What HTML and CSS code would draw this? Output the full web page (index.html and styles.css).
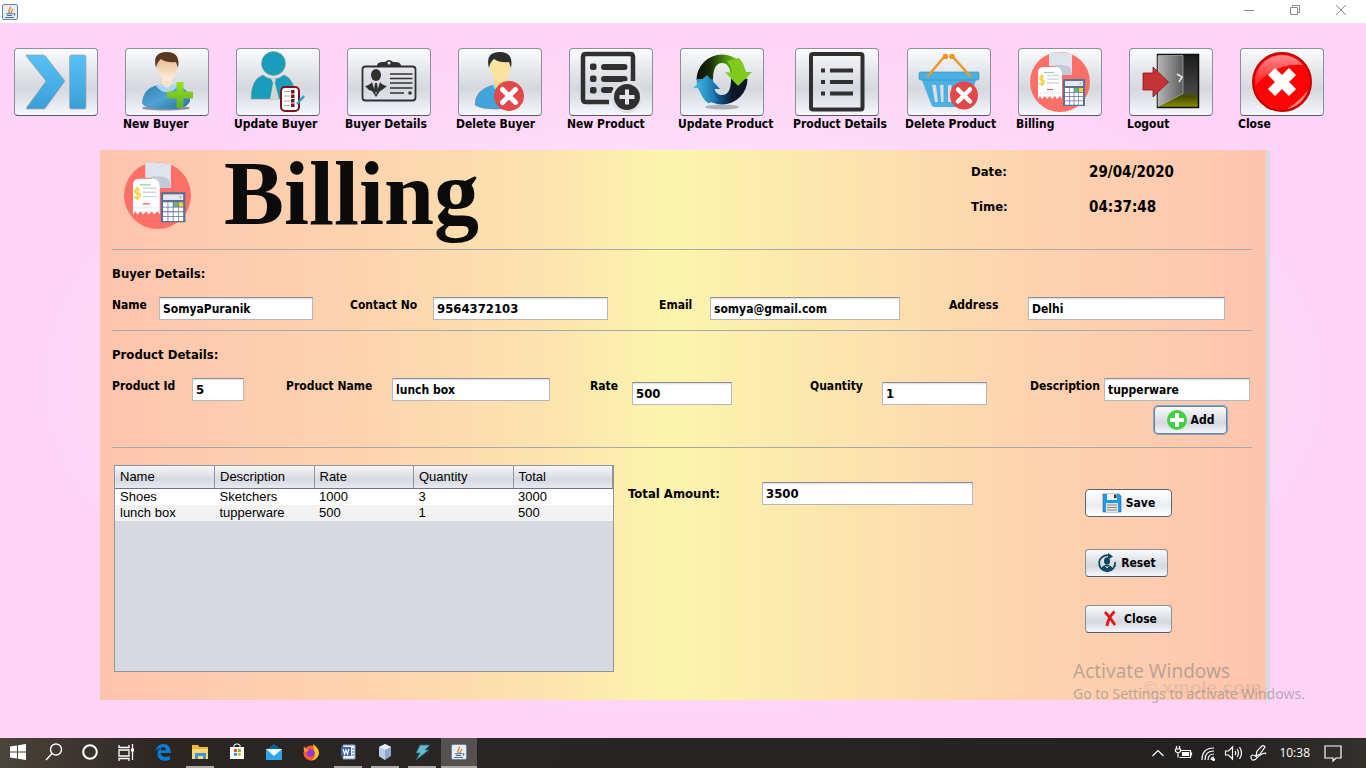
FILE: index.html
```html
<!DOCTYPE html>
<html lang="en">
<head>
<meta charset="utf-8">
<title>Billing</title>
<link rel="stylesheet" href="styles.css">
</head>
<body>
<svg class="defs" width="0" height="0" aria-hidden="true">
  <defs>
    <linearGradient id="gBlue" x1="0" y1="0" x2="0" y2="1"><stop offset="0" stop-color="#57c1f7"/><stop offset="1" stop-color="#3a9fd8"/></linearGradient>
    <linearGradient id="gShirt" x1="0" y1="0" x2="1" y2="1"><stop offset="0" stop-color="#2f7fb0"/><stop offset=".5" stop-color="#4fa3d4"/><stop offset="1" stop-color="#1f6c9c"/></linearGradient>
    <linearGradient id="gSkin" x1="0" y1="0" x2="0" y2="1"><stop offset="0" stop-color="#e8b98c"/><stop offset="1" stop-color="#fff1df"/></linearGradient>
    <linearGradient id="gLime" x1="0" y1="0" x2="0" y2="1"><stop offset="0" stop-color="#9be01c"/><stop offset="1" stop-color="#5fae2b"/></linearGradient>
    <linearGradient id="gGreen" x1="0" y1="0" x2="1" y2="0"><stop offset="0" stop-color="#0a1204"/><stop offset=".25" stop-color="#152707"/><stop offset=".6" stop-color="#4f9a10"/><stop offset="1" stop-color="#8ed321"/></linearGradient>
    <linearGradient id="gNavy" x1="0" y1="0" x2="1" y2="0"><stop offset="0" stop-color="#2fa0d4"/><stop offset=".4" stop-color="#0f5f9b"/><stop offset=".7" stop-color="#0b1726"/><stop offset="1" stop-color="#0b1726"/></linearGradient>
    <linearGradient id="gAqua" x1="0" y1="0" x2="1" y2="0"><stop offset="0" stop-color="#49c3ea"/><stop offset="1" stop-color="#0f62a0"/></linearGradient>
    <linearGradient id="gDoor" x1="0" y1="0" x2="1" y2="0"><stop offset="0" stop-color="#b5b5b5"/><stop offset="1" stop-color="#5c5c5c"/></linearGradient>
    <linearGradient id="gDark" x1="0" y1="0" x2="0" y2="1"><stop offset="0" stop-color="#1c1c1c"/><stop offset=".7" stop-color="#454545"/><stop offset=".8" stop-color="#4b4d00"/><stop offset="1" stop-color="#8a8f00"/></linearGradient>
    <linearGradient id="gGloss" x1="0" y1="0" x2="0" y2="1"><stop offset="0" stop-color="#ff8a8a"/><stop offset="1" stop-color="#ff1a1a"/></linearGradient>
    <symbol id="billing" viewBox="12 4 60 60">
      <circle cx="42" cy="34" r="30" fill="#fe6f67"/>
      <path d="M31 5q11-2 23 1v21H42V18H31z" fill="#dfe3eb"/>
      <path d="M36 18q0-2 8-1 10 0 10 10h-9z" fill="#c3c9d6"/>
      <path d="M20 51V24q0-5 6-5h13q5 1 5 8v24l-2-3-3 3-2-3-3 3-2-3-3 3-2-3-3 3-2-3z" fill="#fff"/>
      <path d="M26 24.500h10" stroke="#8ed6a5" stroke-width="1.200"/>
      <path d="M29 27.500h12M29 31h12M29 35h12" stroke="#cfd5df" stroke-width="1.300"/>
      <path d="M29 41.500h6" stroke="#f2605c" stroke-width="1.200"/>
      <path d="M26 29q-4-2-4 1t3 2q3 2 0 4-2 1-4-1M24 26v12" fill="none" stroke="#fbcf3a" stroke-width="1.500"/>
      <path d="M20 45h23" stroke="#cfd5df" stroke-dasharray="1 1"/>
      <rect x="45" y="31" width="22" height="27" fill="#5b6f92"/>
      <rect x="47" y="33" width="18" height="5" fill="#e4e9f1"/>
      <path d="M61.500 34.500h2v2h-2z" fill="#b4bccb"/>
      <path d="M47 40h4v4h-4zM51.700 40h4v4h-4zM47 44.700h4v3.500h-4zM51.700 44.700h4v3.500h-4zM56.400 44.700h4v3.500h-4zM61 44.700h4v3.500h-4zM47 49h4v3.500h-4zM51.700 49h4v3.500h-4zM56.400 49h4v3.500h-4zM61 49h4v3.500h-4zM47 53.300h4v3.500h-4zM51.700 53.300h4v3.500h-4zM56.400 53.300h4v3.500h-4zM61 53.300h4v3.500h-4z" fill="#fff"/>
      <path d="M56.400 40h4v4h-4z" fill="#5bbd79"/><path d="M61 40h4v4h-4z" fill="#fbcf3a"/>
    </symbol>
    <symbol id="java" viewBox="0 0 16 16">
      <rect x=".5" y=".5" width="15" height="15" rx="1.500" fill="#e7edf2" stroke="#68839b"/>
      <path d="M8 9C4.500 6.500 9.500 5.500 8.300 2.500M9.500 9C8 7.500 11.500 6.500 10.500 4.800" fill="none" stroke="#e8832a" stroke-width="1.300"/>
      <path d="M4 9.800h7M5 11.500h5M3 13.500h9M11.500 9.500q2.500 0 .5 2" fill="none" stroke="#45718f" stroke-width="1.100"/>
    </symbol>
  </defs>
</svg>

<header class="titlebar">
  <svg class="titlebar__icon" viewBox="0 0 16 16" aria-hidden="true"><use href="#java"/></svg>
  <div class="titlebar__controls">
    <button type="button" aria-label="Minimize"><svg viewBox="0 0 12 12"><path d="M1 6.500h10"/></svg></button>
    <button type="button" aria-label="Restore"><svg viewBox="0 0 12 12"><path d="M1.500 3.500h7v7h-7zM3.500 3.500v-2h7v7h-2"/></svg></button>
    <button type="button" aria-label="Close window"><svg viewBox="0 0 12 12"><path d="M1 1l10 10M11 1L1 11"/></svg></button>
  </div>
</header>

<main class="desktop">
  <nav class="toolbar" aria-label="Main">
    <div class="tool">
      <button type="button" class="metal tool__button" aria-label="Collapse">
        <svg viewBox="0 0 84 68"><path d="M12 7h17.500q1 0 2 1.200L51 33 31.500 60q-1 1-2 1H13q-1 0-.5-1.500L32 33 12 8z" fill="url(#gBlue)" stroke="#a9a49f" stroke-width=".7"/><rect x="55.500" y="7" width="16.500" height="54" rx="2" fill="url(#gBlue)" stroke="#a9a49f" stroke-width=".7"/></svg>
      </button>
    </div>
    <div class="tool">
      <button type="button" class="metal tool__button" aria-labelledby="t1">
        <svg viewBox="0 0 84 68"><ellipse cx="41" cy="60" rx="24" ry="2.500" fill="#8d9198"/><path d="M17 55q1-15 16-18h17q15 3 15 16-3 9-24 8-22 0-24-6z" fill="url(#gShirt)"/><path d="M31 38q11 13 22 0l-5-2H36z" fill="#a9d6f5"/><path d="M37 28h10v8q-5 7-10 0z" fill="#fbe3c8"/><path d="M32 12q10-5 20 0 1 12-4 18-6 6-11 0-6-7-5-18z" fill="url(#gSkin)"/><path d="M31 20q-4-15 9-16 16-1 13 16l-2-6q-9 1-15-3-4 3-5 9z" fill="#5a3822"/><path d="M51.500 34h7v9.500H68v7h-9.500V60h-7v-9.500H42v-7h9.500z" fill="url(#gLime)"/></svg>
      </button>
      <span class="tool__label" id="t1">New Buyer</span>
    </div>
    <div class="tool">
      <button type="button" class="metal tool__button" aria-labelledby="t2">
        <svg viewBox="0 0 84 68"><circle cx="37.500" cy="15.500" r="12" fill="#189dba" stroke="#9c9c9c" stroke-width=".6"/><path d="M15 51q0-20 12-24 10 8 21 0 11 4 12 24z" fill="#189dba" stroke="#9c9c9c" stroke-width=".6"/><path d="M35 31l2.500-1.500L40 31l-1 4 4 16h-9l3-16z" fill="#d5d2d2"/><rect x="45" y="39" width="18" height="24" rx="4" fill="#fff" stroke="#7d1420" stroke-width="2"/><path d="M48 43.500h6M48 48h6M48 53h6M48 57.500h6" stroke="#a7a7a7"/><path d="M55 42h3.500v3.500H55zM55 46.500h3.500V50H55zM55 51h3.500v3.500H55zM55 55.500h3.500V59H55z" fill="#7d1420"/><path d="M61 56l7-8" stroke="#2ba5c4" stroke-width="2.500"/></svg>
      </button>
      <span class="tool__label" id="t2">Update Buyer</span>
    </div>
    <div class="tool">
      <button type="button" class="metal tool__button" aria-labelledby="t3">
        <svg viewBox="0 0 84 68"><rect x="15.500" y="18.500" width="53" height="34" rx="3" fill="none" stroke="#303030" stroke-width="1.800"/><path d="M30 18q0-4 6-4h2q4-4 8 0h2q6 0 6 4z" fill="#303030"/><circle cx="42" cy="15" r="1.500" fill="#e9eaec"/><ellipse cx="29" cy="27" rx="5" ry="6" fill="#303030"/><path d="M18 38q5-1 7-4l4 13 4-13q2 3 7 4l-5 4-2 1-4 6-4-6-3-1z" fill="#303030"/><path d="M28 35h2l1 7-2 3-2-3z" fill="#303030"/><path d="M43 26h22.500M43 30.500h22.500M43 35h22.500M43 40h22.500M43 45h14" stroke="#303030" stroke-width="1.600"/><circle cx="63" cy="45" r="1.800" fill="#303030"/></svg>
      </button>
      <span class="tool__label" id="t3">Buyer Details</span>
    </div>
    <div class="tool">
      <button type="button" class="metal tool__button" aria-labelledby="t4">
        <svg viewBox="0 0 84 68"><path d="M17 57q0-15 18-20h12q16 4 15 20-8 4-24 4-15 0-21-4z" fill="#3fa5dc" stroke="#777" stroke-width=".5"/><path d="M34 37l7 9q5-2 8-8z" fill="#8ee5dd"/><path d="M36 27h12v8l-7 6-5-4z" fill="#f6d88b"/><path d="M32 14q10-4 20 0 1 11-4 17-6 6-11 0-6-7-5-17z" fill="#fae39d"/><path d="M31 20q-4-15 9-16 16-1 13 16l-2-6q-9 1-15-3-4 3-5 9z" fill="#2d2d2d"/><circle cx="51" cy="48" r="15" fill="#e2474a"/><path d="M44.500 41.500l13 13M57.500 41.500l-13 13" stroke="#fff" stroke-width="5" stroke-linecap="round"/></svg>
      </button>
      <span class="tool__label" id="t4">Delete Buyer</span>
    </div>
    <div class="tool">
      <button type="button" class="metal tool__button" aria-labelledby="t5">
        <svg viewBox="0 0 84 68"><path d="M40 54H17q-3 0-3-3V9q0-3 3-3h44q3 0 3 3v24" fill="none" stroke="#303030" stroke-width="4.500"/><path d="M35 19h20.500M35 31h20.500M35 42h7" stroke="#303030" stroke-width="6" stroke-linecap="round"/><rect x="21" y="15.500" width="6.500" height="6.500" rx="2" fill="#303030"/><rect x="21" y="27.500" width="6.500" height="6.500" rx="2" fill="#303030"/><rect x="21" y="39" width="6.500" height="6.500" rx="2" fill="#303030"/><circle cx="58" cy="49" r="16" fill="#dfe1e5"/><circle cx="58" cy="49" r="13" fill="#303030"/><path d="M50.500 49h15M58 41.500v15" stroke="#e5e7ea" stroke-width="4"/></svg>
      </button>
      <span class="tool__label" id="t5">New Product</span>
    </div>
    <div class="tool">
      <button type="button" class="metal tool__button" aria-labelledby="t6">
        <svg viewBox="0 0 84 68"><ellipse cx="42" cy="59" rx="17" ry="2.500" fill="#b0b2b8"/><path d="M16.500 32a25.500 25.500 0 0 1 51 0H51q0-17-9-17t-9 17z" fill="url(#gGreen)"/><path d="M67.500 31a25.500 25.500 0 0 1-51 0H33q0 16 9 16t9-16z" fill="url(#gNavy)"/><path d="M45 24l7 1q-1-7-5-12l12-3q6 6 6 14h7L58 38z" fill="#82c91e"/><path d="M13 40l14-13 13 14h-7q1 6 6 12l-11 2q-8-6-8-15z" fill="url(#gAqua)"/></svg>
      </button>
      <span class="tool__label" id="t6">Update Product</span>
    </div>
    <div class="tool">
      <button type="button" class="metal tool__button" aria-labelledby="t7">
        <svg viewBox="0 0 84 68"><rect x="16" y="6" width="51.500" height="55.500" rx="2" fill="none" stroke="#303030" stroke-width="4"/><path d="M35 22.500h23M35 34h23M35 45.500h23M26 22.500h4M26 34h4M26 45.500h4" stroke="#303030" stroke-width="4"/></svg>
      </button>
      <span class="tool__label" id="t7">Product Details</span>
    </div>
    <div class="tool">
      <button type="button" class="metal tool__button" aria-labelledby="t8">
        <svg viewBox="0 0 84 68"><path d="M15 32h54l-8 24q-1 3-4 3H28q-3 0-4-3z" fill="#4bb1e4"/><path d="M25 37h4l2 17h-3zM33 37h3.500v17H34zM41 37h3.500v17H41zM49 37h4l-1 17h-3z" fill="#dcdde1"/><path d="M13 24h58q1 0 1 1.500v5q0 1.500-2 1.500H14q-2 0-2-1.500v-5q0-1.500 1-1.500z" fill="#4bb1e4" stroke="#2f8cc0" stroke-width=".6"/><path d="M21 28L37 9M63 28L46 9" stroke="#e99a24" stroke-width="2.600" stroke-linecap="round"/><circle cx="38.500" cy="8.500" r="2.800" fill="#e99a24"/><circle cx="45" cy="8.500" r="2.800" fill="#e99a24"/><circle cx="57" cy="47.500" r="14" fill="#e2474a"/><path d="M51 41.500l12 12M63 41.500l-12 12" stroke="#fff" stroke-width="4.500" stroke-linecap="round"/></svg>
      </button>
      <span class="tool__label" id="t8">Delete Product</span>
    </div>
    <div class="tool">
      <button type="button" class="metal tool__button" aria-labelledby="t9">
        <svg viewBox="0 0 84 68"><use href="#billing" x="12" y="4" width="60" height="60"/></svg>
      </button>
      <span class="tool__label" id="t9">Billing</span>
    </div>
    <div class="tool">
      <button type="button" class="metal tool__button" aria-labelledby="t10">
        <svg viewBox="0 0 84 68"><rect x="28.500" y="6.500" width="41" height="53" fill="url(#gDark)" stroke="#0d0d0d" stroke-width="1.500"/><path d="M29 7.500h25v38L29 58.500z" fill="url(#gDoor)" stroke="#c4c4c4" stroke-width=".6"/><path d="M48 26l5 3-3 5" fill="none" stroke="#eee" stroke-width="1.500"/><path d="M14 25h10v-6l15.500 15L24 49v-7H14z" fill="#c73236" stroke="#7d1518" stroke-width=".8"/></svg>
      </button>
      <span class="tool__label" id="t10">Logout</span>
    </div>
    <div class="tool">
      <button type="button" class="metal tool__button" aria-labelledby="t11">
        <svg viewBox="0 0 84 68"><circle cx="42" cy="34" r="29" fill="#fb0506" stroke="#c40000" stroke-width="2"/><path d="M15 34a27 27 0 0 1 48-17Q36 14 15 38z" fill="url(#gGloss)"/><path d="M68 42q-6 16-21 19 12-7 21-19z" fill="#ff8b8b"/><path d="M31.500 23.500l21 21M52.500 23.500l-21 21" stroke="#fff" stroke-width="10"/></svg>
      </button>
      <span class="tool__label" id="t11">Close</span>
    </div>
  </nav>

  <section class="panel" aria-label="Billing">
    <div class="panel__head">
      <svg class="panel__logo" viewBox="0 0 60 60" aria-hidden="true"><use href="#billing" width="60" height="60"/></svg>
      <h1 class="panel__title">Billing</h1>
      <dl class="stamp">
        <dt>Date:</dt><dd>29/04/2020</dd>
        <dt>Time:</dt><dd>04:37:48</dd>
      </dl>
    </div>

    <div class="group">
      <h2>Buyer Details:</h2>
      <div class="row row--buyer">
        <div class="field field--name"><label for="name">Name</label><input id="name" type="text" value="SomyaPuranik"></div>
        <div class="field field--contact"><label for="contact">Contact No</label><input id="contact" class="numeric" type="text" value="9564372103"></div>
        <div class="field field--email"><label for="email">Email</label><input id="email" type="text" value="somya@gmail.com"></div>
        <div class="field field--address"><label for="address">Address</label><input id="address" type="text" value="Delhi"></div>
      </div>
    </div>

    <div class="group group--product">
      <h2>Product Details:</h2>
      <div class="row row--product">
        <div class="field field--id"><label for="pid">Product Id</label><input id="pid" class="numeric" type="text" value="5"></div>
        <div class="field field--product"><label for="pname">Product Name</label><input id="pname" type="text" value="lunch box"></div>
        <div class="field field--rate field--low"><label for="rate">Rate</label><input id="rate" class="numeric" type="text" value="500"></div>
        <div class="field field--qty field--low"><label for="qty">Quantity</label><input id="qty" class="numeric" type="text" value="1"></div>
        <div class="field field--desc"><label for="desc">Description</label><input id="desc" type="text" value="tupperware"></div>
      </div>
      <button type="button" class="metal action action--add">
        <svg viewBox="0 0 20 20" aria-hidden="true"><circle cx="10" cy="10" r="10" fill="#42cf43"/><path d="M3 10h14M10 3v14" stroke="#fff" stroke-width="4"/></svg>Add
      </button>
    </div>

    <div class="bill">
      <div class="grid">
        <table>
          <thead><tr><th>Name</th><th>Description</th><th>Rate</th><th>Quantity</th><th>Total</th></tr></thead>
          <tbody>
            <tr><td>Shoes</td><td>Sketchers</td><td>1000</td><td>3</td><td>3000</td></tr>
            <tr><td>lunch box</td><td>tupperware</td><td>500</td><td>1</td><td>500</td></tr>
          </tbody>
        </table>
      </div>
      <div class="total"><label for="total">Total Amount:</label><input id="total" class="numeric" type="text" value="3500"></div>
      <div class="actions">
        <button type="button" class="metal action action--save">
          <svg viewBox="0 0 20 20" aria-hidden="true"><path d="M1 1h16l2 2v16H1z" fill="#1d9bf0" stroke="#51606c" stroke-width=".6"/><path d="M5 1h10v6H5z" fill="#f1f1f1"/><path d="M12 1.500h2.500V5H12z" fill="#333"/><path d="M4 10h12v9H4z" fill="#e3e3e3"/><path d="M5 12h10M5 14.500h10M5 17h10" stroke="#8b8b8b"/></svg>Save
        </button>
        <button type="button" class="metal action action--reset">
          <svg viewBox="0 0 20 20" aria-hidden="true"><path d="M12 2.500A8 8 0 1 0 18 9" fill="none" stroke="#0c4765" stroke-width="1.800"/><path d="M11 0l5 3.500-5 3z" fill="#0c4765"/><ellipse cx="10" cy="8" rx="3" ry="3.800" fill="#0c4765"/><path d="M4.500 16q0-3 4-4h3q4 1 4 4-5 3-11 0z" fill="#0c4765"/><path d="M8.500 13l1.500 2 1.500-2" stroke="#dfe3e8" fill="none"/></svg>Reset
        </button>
        <button type="button" class="metal action action--close">
          <svg viewBox="0 0 20 20" aria-hidden="true"><path d="M5 3q5 5 10 13M14.500 2.500Q8 9 7 17" fill="none" stroke="#e8141b" stroke-width="2.800"/></svg>Close
        </button>
      </div>
    </div>
  </section>

  <div class="watermark" aria-hidden="true">
    <p class="watermark__title">Activate Windows</p>
    <p class="watermark__text">Go to Settings to activate Windows.</p>
    <p class="watermark__site">© xmole.com</p>
  </div>
</main>

<footer class="taskbar">
  <div class="taskbar__apps">
    <button type="button" class="system" aria-label="Start"><svg viewBox="0 0 20 20"><path d="M2 4.500l7-1v6H2zM10 3.300l8-1.300v7.500h-8zM2 10.500h7v6l-7-1zM10 10.500h8V18l-8-1.200z" fill="#fff"/></svg></button>
    <button type="button" class="system" aria-label="Search"><svg viewBox="0 0 20 20"><path d="M2 18l6-6.500" stroke="#fff" stroke-width="1.400"/><circle cx="12" cy="7.500" r="5.500" fill="none" stroke="#fff" stroke-width="1.400"/></svg></button>
    <button type="button" class="system" aria-label="Cortana"><svg viewBox="0 0 20 20"><circle cx="10" cy="10" r="6.800" fill="none" stroke="#fff" stroke-width="2"/></svg></button>
    <button type="button" aria-label="Task view"><svg viewBox="0 0 20 20"><path d="M3 3v2.500h10V3M3 8h10v6H3zM3 19v-2.500h10V19M16.500 2v16" fill="none" stroke="#fff" stroke-width="1.300"/><path d="M15 6.500h3v3h-3z" fill="#fff"/></svg></button>
    <button type="button" aria-label="Edge"><svg viewBox="0 0 20 20"><path d="M2.500 9Q4 2 10.500 2q7 0 7.500 9H7.500q1 4 5 4 3 0 4.500-1v3.500q-3 1.500-6 1.200-7-.7-6.500-7.700Q5 7 9 5.500 4.500 6 2.500 9zm5.200-.8H13Q12.500 5 10.300 5 8 5.200 7.700 8.200z" fill="#0a7cd8"/></svg></button>
    <button type="button" class="is-open" aria-label="File Explorer"><svg viewBox="0 0 20 20"><path d="M2 3h6l1.500 2H18v12H2z" fill="#f0b92f"/><path d="M2 7h16v10H2z" fill="#fcd876"/><path d="M5 17v-6h11v6h-3v-3H8v3z" fill="#3f95d6"/></svg></button>
    <button type="button" aria-label="Store"><svg viewBox="0 0 20 20"><path d="M7 5V3q3-2.500 6 0v2" fill="none" stroke="#fff"/><path d="M3 5h14v12H3z" fill="#fff"/><path d="M7 7h3v3H7z" fill="#e8502a"/><path d="M10.800 7h3v3h-3z" fill="#7db928"/><path d="M7 10.800h3v3H7z" fill="#23a1e2"/><path d="M10.800 10.800h3v3h-3z" fill="#f7b41a"/></svg></button>
    <button type="button" aria-label="Mail"><svg viewBox="0 0 20 20"><path d="M2 8l8-6 8 6v10H2z" fill="#0a5fa8"/><path d="M2 7h16v11H2z" fill="#2ca5e8"/><path d="M2 7h16l-8 7z" fill="#f2f8fd"/></svg></button>
    <button type="button" aria-label="Firefox"><svg viewBox="0 0 20 20"><circle cx="10" cy="11" r="7.500" fill="#ff5a2c"/><path d="M12 2q6 4 6 10-2 6-8 6.500 5-3 4-8-1-3-2-8.500z" fill="#ffc233"/><circle cx="9.500" cy="11" r="3.800" fill="#8a38d8"/><path d="M3 4q1 3 5 4-1 2-4 2-2-2-1-6z" fill="#ff9a20"/></svg></button>
    <button type="button" class="is-open" aria-label="Word"><svg viewBox="0 0 20 20"><path d="M5 3h12v14H5z" fill="#eef3fb" stroke="#7d96c7"/><path d="M3 5h10v9H3z" fill="#3e62aa"/><path d="M5 7l1.500 5L8 8l1.500 4L11 7" fill="none" stroke="#fff" stroke-width="1.200"/><path d="M14 7h2M14 10h2M14 13h2" stroke="#3e62aa"/></svg></button>
    <button type="button" class="is-open" aria-label="NetBeans"><svg viewBox="0 0 20 20"><path d="M10 2l6 3v9l-6 4-6-4V5z" fill="#8da7cf"/><path d="M10 2l6 3-6 3-6-3z" fill="#e6effa"/><path d="M4 5l6 3v10l-6-4z" fill="#b9cde8"/></svg></button>
    <button type="button" class="is-open" aria-label="Server"><svg viewBox="0 0 20 20"><path d="M8 3h10l-5 5h4L4 18l4-7H4z" fill="#66bad0" stroke="#24647a" stroke-width=".8"/></svg></button>
    <button type="button" class="is-open is-active" aria-label="Java application"><svg viewBox="0 0 20 20"><use href="#java" x="2" y="2" width="16" height="16"/></svg></button>
  </div>
  <div class="taskbar__tray">
    <svg viewBox="0 0 20 20" aria-hidden="true"><path d="M4.500 13L10 7.500l5.500 5.500"/></svg>
    <svg viewBox="0 0 20 20" aria-hidden="true"><path d="M7 7.500h10.500v7H6.500M18.500 9.500v3M3.500 3v3M6.500 3v3M2.500 6h5v2.500l-1.500 1H4l-1.500-1zM5 9.500v5"/><path d="M9.500 9.500h6v3h-6z" fill="#fff"/></svg>
    <svg viewBox="0 0 20 20" aria-hidden="true"><path d="M4 17Q4 5 16 5M7 17q0-9 9-9M10 17q0-6 6-6M13 17q0-3 3-3"/><circle cx="15.500" cy="16.500" r="1" fill="#fff"/></svg>
    <svg viewBox="0 0 20 20" aria-hidden="true"><path d="M2.500 8h3l4-4v12l-4-4h-3zM12 8q1.500 2 0 4M14 6q3 4 0 8M16.500 4q4 6 0 12"/></svg>
    <svg viewBox="0 0 20 20" aria-hidden="true"><path d="M8 13l1-5 5-5q2-1 3 1l-5 7zM9 14q-6-4-6 0 0 5 5 2 4-5 9-6l1 1"/></svg>
    <time class="clock">10:38</time>
    <svg viewBox="0 0 20 20" aria-hidden="true"><path d="M2 3h16v12h-5l-3 3v-3H2z"/></svg>
  </div>
</footer>
</body>
</html>
```
FILE: styles.css
```css
* { box-sizing: border-box; }

body {
  margin: 0;
  min-height: 100vh;
  display: flex;
  flex-direction: column;
  font-family: "DejaVu Sans Condensed", Tahoma, "Noto Sans", sans-serif;
  font-size: 12px;
  font-weight: 700;
  line-height: 16px;
  color: #000;
}

.defs { position: absolute; }

button, input { font: inherit; color: inherit; }
h1, h2, p, dl, dd { margin: 0; }

/* Title bar */
.titlebar {
  display: flex;
  justify-content: space-between;
  align-items: center;
  height: 23px;
  padding: 0 2px;
  background: #fff;
}
.titlebar__icon { width: 16px; height: 16px; }
.titlebar__controls { display: flex; height: 22px; }
.titlebar__controls button {
  width: 46px;
  padding: 0 0 4px;
  border: 0;
  background: none;
}
.titlebar__controls svg {
  display: block;
  width: 12px;
  height: 12px;
  margin: 0 auto;
  fill: none;
  stroke: #8a8a8a;
}

/* Desktop area */
.desktop {
  position: relative;
  flex: 1;
  display: flex;
  flex-direction: column;
  padding-bottom: 38px;
  background: radial-gradient(ellipse at 50% 50%, #ffe9fd 0%, #fee0fb 35%, #fdd3f7 70%);
}

.toolbar {
  display: grid;
  grid-template-columns: repeat(6, 111fr) 115fr 112fr repeat(4, 111fr);
  padding: 25px 17px 0 12px;
  height: 127px;
}
.tool {
  display: flex;
  flex-direction: column;
  min-width: 0;
}
.tool__button {
  width: 84px;
  height: 68px;
  margin-left: 2px;
  padding: 0;
}
.tool__button svg { display: block; width: 84px; height: 68px; margin: -1px; }
.tool__label { white-space: nowrap; }

.metal {
  border: 1px solid #8b8f97;
  border-bottom-color: #565b66;
  border-radius: 4px;
  background: linear-gradient(#fafbfc 0%, #e3e5e9 35%, #d5d8df 60%, #dfe2e8 75%, #f6f8fd 100%);
}

/* Billing panel */
.panel {
  flex: 1;
  display: flex;
  flex-direction: column;
  margin: 0 96px 0 100px;
  padding: 0 14px 0 12px;
  border-right: 4px solid #d6d9df;
  background: linear-gradient(90deg, #fec4ae 0%, #fdd3ae 22%, #fce3ae 38%, #fcf3ad 48%, #fcf3ad 50%, #fce3ae 65%, #fdd3ae 80%, #fec4ae 100%);
}

.panel__head {
  display: flex;
  align-items: flex-start;
  height: 100px;
  padding-left: 12px;
  border-bottom: 1px solid #a5a9ae;
}
.panel__logo { width: 67px; height: 67px; margin-top: 12px; }
.panel__title {
  margin: 0 auto 0 33px;
  font-family: "Liberation Serif", serif;
  font-size: 90px;
  line-height: 88px;
  color: #0b0b0b;
}
.stamp {
  display: grid;
  grid-template-columns: 118px 163px;
  row-gap: 19px;
  padding-top: 14px;
  font-size: 13px;
}
.stamp dd { font-size: 15px; }

.group {
  height: 81px;
  padding-top: 16px;
  border-bottom: 1px solid #a5a9ae;
}
.group h2 { font-size: 13px; }
.group--product { height: 117px; }

.row { display: grid; margin-top: 15px; }
.row--buyer { grid-template-columns: 238fr 309fr 290fr 303fr; }
.row--product { grid-template-columns: 174fr 304fr 220fr 220fr 222fr; }

.field { display: grid; align-items: start; }
.field label { white-space: nowrap; }
.field--name { grid-template-columns: 47fr 154fr 37fr; }
.field--contact { grid-template-columns: 83fr 175fr 51fr; }
.field--email { grid-template-columns: 51fr 190fr 49fr; }
.field--address { grid-template-columns: 79fr 197fr 27fr; }
.field--id { grid-template-columns: 80fr 52fr 42fr; }
.field--product { grid-template-columns: 106fr 158fr 40fr; }
.field--rate { grid-template-columns: 42fr 100fr 78fr; }
.field--qty { grid-template-columns: 72fr 105fr 43fr; }
.field--desc { grid-template-columns: 74fr 146fr 2fr; }
.field--low input { margin-top: 4px; }

input {
  width: 100%;
  min-width: 0;
  height: 23px;
  padding: 0 3px;
  border: 1px solid #b4b8be;
  border-top: 1px solid #8b8d92;
  border-radius: 0;
  background: linear-gradient(#d9dade 0, #fff 2px);
}
input.numeric { font-size: 13px; }

.action {
  display: flex;
  align-items: center;
  justify-content: center;
  gap: 4px;
  height: 28px;
  padding: 0;
}
.action svg { width: 20px; height: 20px; }
.action--add {
  width: 73px;
  margin: 1px 25px 0 auto;
  border-color: #6d7f95;
  box-shadow: 0 0 0 1px #7ba6cf;
}
.action--save { width: 87px; background: linear-gradient(#fff, #e9ecf2 60%, #fff); border-color: #5f636b; }
.action--reset { width: 83px; margin-top: 32px; }
.action--close { width: 87px; margin-top: 28px; }

/* Items table */
.bill {
  flex: 1;
  display: grid;
  grid-template-columns: 516fr 457fr 167fr;
  padding: 17px 0 28px;
}
.grid {
  margin: 0 14px 0 2px;
  border: 1px solid #8f949d;
  background: #d6d9e0;
}
table {
  width: 100%;
  table-layout: fixed;
  border-collapse: collapse;
  font-family: "Liberation Sans", Arial, sans-serif;
  font-size: 13px;
}
th, td {
  height: 16px;
  padding: 0 5px;
  text-align: left;
  font-weight: 400;
}
th {
  height: 22px;
  border-right: 1px solid #8f949d;
  border-bottom: 1px solid #6f747e;
  background: linear-gradient(#f5f6f8, #d6d9df 60%, #e6e9f2);
}
tbody tr { background: #fff; }
tbody tr:nth-child(even) { background: #f2f2f2; }

.total {
  display: grid;
  grid-template-columns: 134fr 211fr 112fr;
  align-items: start;
  padding-top: 17px;
}
.total label { padding-top: 4px; font-size: 13px; }
.actions { padding-top: 24px; }

/* Activation notice */
.watermark {
  position: absolute;
  right: 57px;
  bottom: 34px;
  width: 236px;
  font-family: "Noto Sans", sans-serif;
  font-weight: 400;
  color: rgba(128, 128, 128, .55);
  white-space: nowrap;
  pointer-events: none;
}
.watermark__title { font-size: 19px; line-height: 26px; }
.watermark__text { font-size: 14px; line-height: 20px; }
.watermark__site {
  position: absolute;
  left: 70px;
  top: 20px;
  font-family: "Liberation Sans", sans-serif;
  font-size: 19px;
  line-height: 20px;
  font-weight: 700;
  color: rgba(128, 128, 128, .18);
}

/* Taskbar */
.taskbar {
  display: flex;
  justify-content: space-between;
  height: 30px;
  background: linear-gradient(90deg, #4a443b 0, #2b2622 12%, #262524 60%, #242221 90%, #33302c 100%);
}
.taskbar__apps { display: flex; }
.taskbar__apps button {
  width: 36px;
  margin-right: 1px;
  padding: 0;
  border: 0;
  border-bottom: 2px solid transparent;
  background: none;
}
.taskbar__apps .system { margin-right: 0; }
.taskbar__apps svg { display: block; width: 20px; height: 20px; margin: 0 auto; }
.taskbar__apps .is-open { background: linear-gradient(#aaa9a8, #aaa9a8) center bottom / 28px 2px no-repeat border-box; }
.taskbar__apps .is-active { background: #55514e; border-bottom-color: #aaa9a8; }
.taskbar__tray {
  display: flex;
  align-items: center;
  gap: 5px;
  padding-right: 23px;
}
.taskbar__tray svg {
  width: 20px;
  height: 20px;
  fill: none;
  stroke: #fff;
  stroke-width: 1.2;
}
.clock {
  margin: 0 8px 0 6px;
  font-family: "Open Sans", sans-serif;
  font-size: 12px;
  font-weight: 400;
  color: #fff;
}
```
